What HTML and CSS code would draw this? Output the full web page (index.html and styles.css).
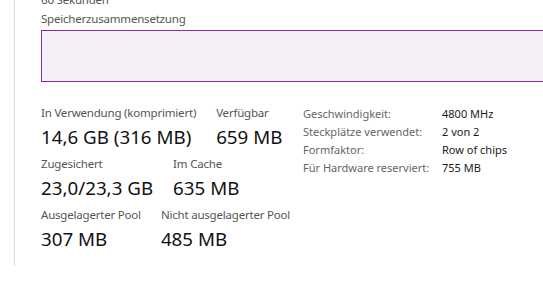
FILE: index.html
```html
<!DOCTYPE html>
<html lang="de">
<head>
<meta charset="utf-8">
<link rel="stylesheet" href="styles.css">
</head>
<body>
<div class="pane">
  <div class="cut">60 Sekunden</div>
  <div class="title">Speicherzusammensetzung</div>
  <div class="comp"></div>
  <div class="stats">
    <div class="left">
      <div class="row">
        <div class="item"><div class="lbl">In Verwendung (komprimiert)</div><div class="val">14,6 GB (316 MB)</div></div>
        <div class="item"><div class="lbl">Verfügbar</div><div class="val">659 MB</div></div>
      </div>
      <div class="row">
        <div class="item"><div class="lbl">Zugesichert</div><div class="val">23,0/23,3 GB</div></div>
        <div class="item"><div class="lbl">Im Cache</div><div class="val">635 MB</div></div>
      </div>
      <div class="row">
        <div class="item"><div class="lbl">Ausgelagerter Pool</div><div class="val">307 MB</div></div>
        <div class="item"><div class="lbl">Nicht ausgelagerter Pool</div><div class="val">485 MB</div></div>
      </div>
    </div>
    <div class="props">
      <div class="pk">Geschwindigkeit:</div><div class="pv">4800 MHz</div>
      <div class="pk">Steckplätze verwendet:</div><div class="pv">2 von 2</div>
      <div class="pk">Formfaktor:</div><div class="pv">Row of chips</div>
      <div class="pk">Für Hardware reserviert:</div><div class="pv">755 MB</div>
    </div>
  </div>
</div>
</body>
</html>
```
FILE: styles.css
```css
html, body {
  margin: 0;
  padding: 0;
  background: #ffffff;
  overflow: hidden;
}
body {
  font-family: "Noto Sans", "Open Sans", sans-serif;
  width: 543px;
  height: 281px;
}
.pane {
  margin-left: 14px;
  border-left: 1px solid #dadada;
  height: 266px;
  padding-left: 26px;
  overflow: hidden;
}
.cut, .title, .lbl {
  font-size: 11.5px;
  letter-spacing: -0.2px;
  line-height: 16px;
  color: #555555;
  white-space: nowrap;
}
.cut {
  margin-top: -8px;
}
.title {
  margin-top: 3px;
}
.comp {
  margin-top: 3px;
  width: 560px;
  height: 50px;
  border: 1px solid #8a2c9c;
  background: #f4f0f5;
}
.stats {
  display: flex;
  margin-top: 23px;
}
.left {
  width: 262px;
  display: flex;
  flex-direction: column;
  gap: 7px;
}
.row {
  display: flex;
  gap: 20px;
}
.item {
  display: flex;
  flex-direction: column;
  gap: 4px;
}
.val {
  font-size: 18.75px;
  line-height: 24px;
  color: #111111;
  white-space: nowrap;
}
.props {
  display: grid;
  grid-template-columns: 139px auto;
  grid-auto-rows: 18px;
  margin-top: 0;
  font-size: 11px;
  line-height: 18px;
  white-space: nowrap;
}
.pk {
  color: #666666;
}
.pv {
  color: #1a1a1a;
}
```
